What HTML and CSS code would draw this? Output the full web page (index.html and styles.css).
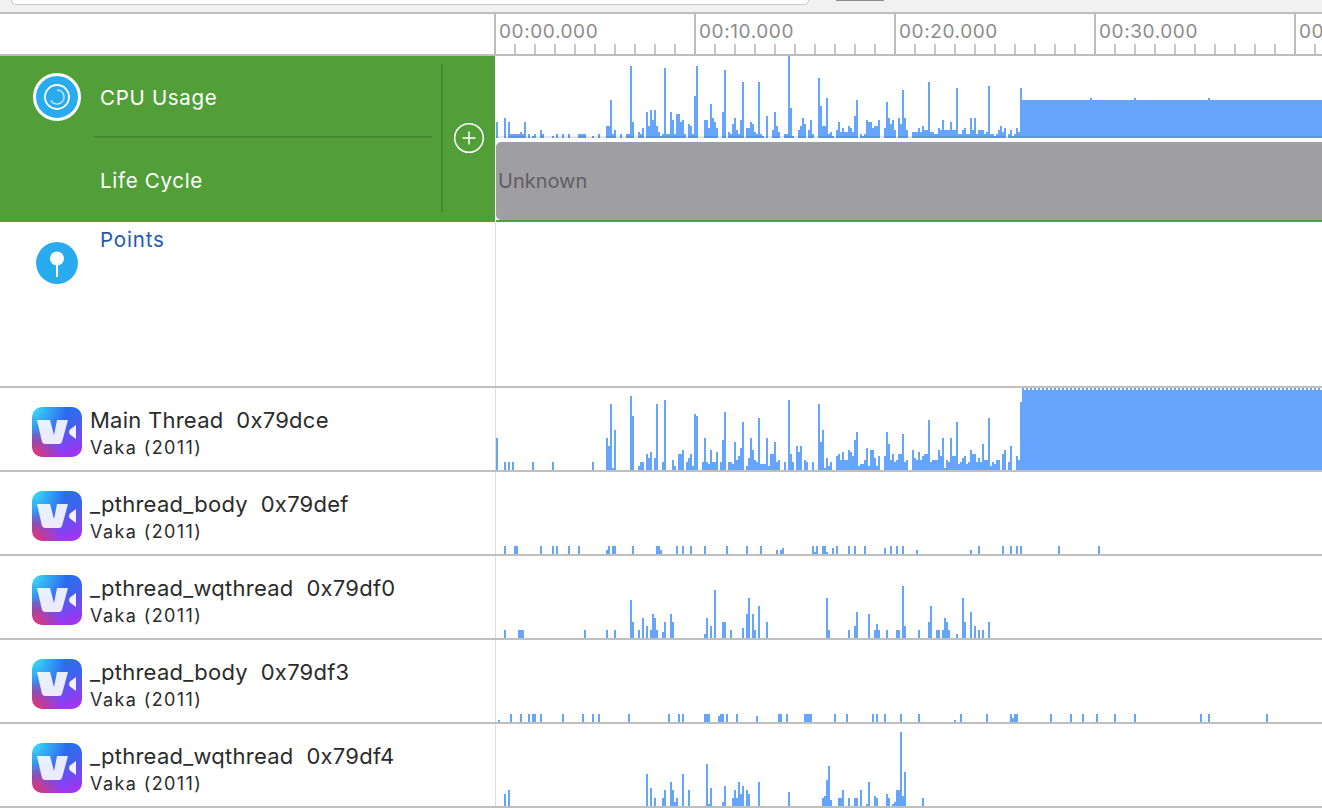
FILE: index.html
```html
<!DOCTYPE html>
<html lang="en">
<head>
  <meta charset="UTF-8">
  <meta name="viewport" content="width=device-width, initial-scale=1.0">
  <title>Instruments Timeline</title>
  <link rel="stylesheet" href="styles.css">
</head>
<body>
  <div class="toolbar">
    <div class="search-field"></div>
    <div class="toolbar-button"></div>
  </div>

  <div class="row ruler-row">
    <div class="side"></div>
    <div class="ruler">
      <div class="ruler-block">00:00.000</div>
      <div class="ruler-block">00:10.000</div>
      <div class="ruler-block">00:20.000</div>
      <div class="ruler-block">00:30.000</div>
      <div class="ruler-block">00:40.000</div>
    </div>
  </div>

  <div class="row selected-row">
    <div class="side selected-side">
      <div class="instrument-icon">
        <svg width="50" height="50" viewBox="0 0 50 50">
          <circle cx="25" cy="25" r="22.5" fill="#29abf0" stroke="#fff" stroke-width="3"/>
          <circle cx="25" cy="25" r="12" fill="none" stroke="#fff" stroke-width="1.8"/>
          <path d="M25 18a7 7 0 1 1-6 10.5" fill="none" stroke="#cdeafb" stroke-width="1.5"/>
        </svg>
      </div>
      <div class="selected-labels">
        <div class="selected-label">CPU Usage</div>
        <div class="selected-label">Life Cycle</div>
      </div>
      <div class="add-cell">
        <svg width="32" height="32" viewBox="0 0 32 32">
          <circle cx="16" cy="16" r="14.3" fill="none" stroke="#fff" stroke-width="1.5"/>
          <path d="M16 9.5v13M9.5 16h13" fill="none" stroke="#fff" stroke-width="1.5"/>
        </svg>
      </div>
    </div>
    <div class="selected-charts">
      <svg class="track cpu-track" id="cpu" width="826" height="82" viewBox="496 0 826 82">
        <rect class="bar" x="1022" y="44" width="300" height="38"/>
        <rect class="bar" x="1090" y="42" width="2" height="2"/>
        <rect class="bar" x="1134" y="42" width="2" height="2"/>
        <rect class="bar" x="1208" y="42" width="2" height="2"/>
        <rect class="track-base" x="496" y="80" width="826" height="2"/>
      </svg>
      <div class="life-cycle">Unknown</div>
    </div>
  </div>

  <div class="row points-row">
    <div class="side points-side">
      <div class="instrument-icon">
        <svg width="50" height="50" viewBox="0 0 50 50">
          <circle cx="25" cy="25" r="21" fill="#29abf0"/>
          <circle cx="25" cy="20.5" r="7" fill="#fff"/>
          <rect x="24" y="24" width="2" height="15" fill="#fff"/>
        </svg>
      </div>
      <div class="points-label">Points</div>
    </div>
    <div class="chart"></div>
  </div>

  <div class="row thread-row">
    <div class="side thread-side">
      <div class="app-icon">
        <svg width="50" height="50" viewBox="0 0 50 50">
          <path d="M5 13h13l4 15 3-15h11l-6 22q-.6 2-3 2H13q-2 0-3-2z" fill="#fff" fill-opacity=".88"/>
          <path d="M44 18v14l-6-4.500q-1-1.500-1-2.500t1-2.500z" fill="#fff" fill-opacity=".92"/>
        </svg>
      </div>
      <div class="thread-text">
        <div class="thread-name">Main Thread  0x79dce</div>
        <div class="thread-app">Vaka (2011)</div>
      </div>
    </div>
    <div class="chart">
      <svg class="track" id="main" width="826" height="82" viewBox="496 0 826 82">
        <rect class="bar" x="1022" y="2" width="300" height="80"/>
        <line class="bar-dots" x1="1022" y1="1" x2="1322" y2="1"/>
      </svg>
    </div>
  </div>

  <div class="row thread-row">
    <div class="side thread-side">
      <div class="app-icon">
        <svg width="50" height="50" viewBox="0 0 50 50">
          <path d="M5 13h13l4 15 3-15h11l-6 22q-.6 2-3 2H13q-2 0-3-2z" fill="#fff" fill-opacity=".88"/>
          <path d="M44 18v14l-6-4.500q-1-1.500-1-2.500t1-2.500z" fill="#fff" fill-opacity=".92"/>
        </svg>
      </div>
      <div class="thread-text">
        <div class="thread-name">_pthread_body  0x79def</div>
        <div class="thread-app">Vaka (2011)</div>
      </div>
    </div>
    <div class="chart">
      <svg class="track" id="body1" width="826" height="82" viewBox="496 0 826 82"></svg>
    </div>
  </div>

  <div class="row thread-row">
    <div class="side thread-side">
      <div class="app-icon">
        <svg width="50" height="50" viewBox="0 0 50 50">
          <path d="M5 13h13l4 15 3-15h11l-6 22q-.6 2-3 2H13q-2 0-3-2z" fill="#fff" fill-opacity=".88"/>
          <path d="M44 18v14l-6-4.500q-1-1.500-1-2.500t1-2.500z" fill="#fff" fill-opacity=".92"/>
        </svg>
      </div>
      <div class="thread-text">
        <div class="thread-name">_pthread_wqthread  0x79df0</div>
        <div class="thread-app">Vaka (2011)</div>
      </div>
    </div>
    <div class="chart">
      <svg class="track" id="wq1" width="826" height="82" viewBox="496 0 826 82"></svg>
    </div>
  </div>

  <div class="row thread-row">
    <div class="side thread-side">
      <div class="app-icon">
        <svg width="50" height="50" viewBox="0 0 50 50">
          <path d="M5 13h13l4 15 3-15h11l-6 22q-.6 2-3 2H13q-2 0-3-2z" fill="#fff" fill-opacity=".88"/>
          <path d="M44 18v14l-6-4.500q-1-1.500-1-2.500t1-2.500z" fill="#fff" fill-opacity=".92"/>
        </svg>
      </div>
      <div class="thread-text">
        <div class="thread-name">_pthread_body  0x79df3</div>
        <div class="thread-app">Vaka (2011)</div>
      </div>
    </div>
    <div class="chart">
      <svg class="track" id="body2" width="826" height="82" viewBox="496 0 826 82"></svg>
    </div>
  </div>

  <div class="row thread-row">
    <div class="side thread-side">
      <div class="app-icon">
        <svg width="50" height="50" viewBox="0 0 50 50">
          <path d="M5 13h13l4 15 3-15h11l-6 22q-.6 2-3 2H13q-2 0-3-2z" fill="#fff" fill-opacity=".88"/>
          <path d="M44 18v14l-6-4.500q-1-1.500-1-2.500t1-2.500z" fill="#fff" fill-opacity=".92"/>
        </svg>
      </div>
      <div class="thread-text">
        <div class="thread-name">_pthread_wqthread  0x79df4</div>
        <div class="thread-app">Vaka (2011)</div>
      </div>
    </div>
    <div class="chart">
      <svg class="track" id="wq2" width="826" height="82" viewBox="496 0 826 82"></svg>
    </div>
  </div>

  <script src="bars.js"></script>
</body>
</html>
```

FILE: styles.css
```css
body {
  margin: 0;
  height: 808px;
  overflow: hidden;
  background: #fff;
  font-family: Inter, "Open Sans", sans-serif;
}

.toolbar {
  display: flex;
  height: 12px;
  padding-left: 11px;
  background: #f1f1f1;
  border-bottom: 2px solid #bdbdbd;
  overflow: hidden;
}
.search-field {
  width: 796px;
  height: 4px;
  background: #fff;
  border: 1px solid #c6c6c6;
  border-top: none;
  border-radius: 0 0 8px 8px;
}
.toolbar-button {
  width: 48px;
  height: 1px;
  margin-left: 27px;
  background: #8b8b8b;
}

.row {
  display: flex;
}
.side {
  flex: none;
  width: 495px;
}
.chart {
  flex: 1;
  border-left: 1px solid #dedede;
  min-width: 0;
}

.ruler-row {
  height: 40px;
  border-bottom: 2px solid #bdbdbd;
}
.ruler {
  display: flex;
  flex: 1;
  margin-left: -1px;
  overflow: hidden;
}
.ruler-block {
  flex: none;
  box-sizing: border-box;
  width: 200px;
  padding: 7px 0 0 3px;
  border-left: 2px solid #bdbdbd;
  font-size: 19px;
  line-height: 21px;
  letter-spacing: 0.6px;
  color: #8c8c8c;
  background: repeating-linear-gradient(90deg, transparent 0 18px, #c6c6c6 18px 20px) left bottom / 100% 10px no-repeat;
}

.selected-row {
  height: 166px;
}
.selected-side {
  display: flex;
  background: #529f39;
  color: #fff;
}
.instrument-icon {
  flex: none;
  width: 50px;
  height: 50px;
  margin-left: 32px;
}
.selected-side .instrument-icon {
  margin-top: 16px;
}
.selected-labels {
  flex: none;
  width: 338px;
  margin: 0 9px 0 12px;
}
.selected-label {
  box-sizing: border-box;
  height: 82px;
  padding: 29px 0 0 6px;
  font-size: 20.5px;
  line-height: 26px;
  letter-spacing: 0.7px;
}
.selected-label:first-child {
  border-bottom: 2px solid #458a33;
}
.selected-label:last-child {
  padding-top: 30px;
}
.add-cell {
  flex: none;
  display: flex;
  align-items: center;
  justify-content: center;
  width: 52px;
  height: 148px;
  margin-top: 8px;
  border-left: 2px solid #458a33;
}
.selected-charts {
  flex: 1;
  min-width: 0;
  margin-left: 1px;
  border-bottom: 2px solid #529f39;
}
.track {
  display: block;
}
.bar {
  fill: #66a5fd;
}
.bar-dots {
  stroke: #66a5fd;
  stroke-width: 2;
  stroke-dasharray: 2 2;
}
.track-base {
  fill: rgba(0, 0, 0, 0.1);
}
.life-cycle {
  box-sizing: border-box;
  height: 78px;
  margin-top: 4px;
  padding: 26px 0 0 2px;
  background: #9f9ea3;
  border-radius: 5px 0 0 5px;
  font-size: 20px;
  line-height: 26px;
  color: #5f5e62;
}

.points-row {
  height: 164px;
  border-bottom: 2px solid #bfbfbf;
}
.points-side {
  display: flex;
}
.points-side .instrument-icon {
  margin-top: 16px;
}
.points-label {
  margin: 5px 0 0 18px;
  font-size: 20.5px;
  line-height: 26px;
  letter-spacing: 0.85px;
  color: #1e5ab0;
}

.thread-row {
  height: 82px;
  border-bottom: 2px solid #bfbfbf;
}
.thread-side {
  display: flex;
  box-sizing: border-box;
  padding: 19px 0 0 32px;
}
.app-icon {
  flex: none;
  width: 50px;
  height: 50px;
  border-radius: 10px;
  background:
    radial-gradient(circle at 0% 100%, #ee3560 0, rgba(238, 53, 96, 0) 42%),
    radial-gradient(circle at 0% 0%, #3fe2f6 0, rgba(63, 226, 246, 0) 48%),
    linear-gradient(160deg, #1278ee 0%, #3f63f0 45%, #a035f2 90%);
}
.thread-text {
  margin-left: 8px;
  color: #2b2b2b;
}
.thread-name {
  font-size: 22px;
  line-height: 27px;
  letter-spacing: 0.25px;
  white-space: pre;
}
.thread-app {
  font-size: 18px;
  line-height: 27px;
  letter-spacing: 1.4px;
}
```

FILE: bars.js
```js
// page x : bar height, bars are 2px wide and stand on the bottom of the track
var tracks = {
  cpu: "496:16 504:20 508:16 510:4 512:4 514:4 516:4 518:4 520:6 522:4 524:16 528:4 532:2 534:4 540:8 542:4 552:2 556:4 562:4 568:4 578:4 580:4 582:4 584:4 592:2 598:4 606:12 608:12 610:38 612:4 614:8 620:4 626:4 628:4 630:72 632:16 638:6 640:4 642:10 646:26 648:12 650:28 652:18 654:28 656:12 658:6 660:2 662:4 664:70 666:4 668:4 670:26 672:18 674:4 676:24 678:24 680:16 682:18 684:4 688:14 690:12 692:4 694:42 696:72 704:18 706:18 708:10 710:34 712:20 714:16 716:10 722:26 724:68 728:6 730:4 732:14 734:20 736:8 738:4 740:18 742:56 746:10 748:10 750:16 752:14 754:6 756:4 758:56 760:4 762:2 766:22 772:8 774:26 776:12 778:6 784:4 786:4 788:82 790:30 792:2 798:8 800:12 802:20 804:14 808:8 810:18 812:4 818:60 820:32 822:12 824:12 826:40 828:4 830:6 832:2 836:8 838:16 840:6 842:10 844:6 846:6 848:12 850:10 852:6 854:22 856:38 860:4 862:2 864:4 866:18 868:16 870:16 872:10 874:12 876:12 878:18 884:10 886:36 888:20 890:14 892:18 894:8 898:20 900:14 902:48 904:20 906:8 912:6 914:6 916:6 918:10 920:6 922:12 924:8 926:8 928:56 930:6 932:6 934:4 936:4 938:10 940:8 942:18 944:8 946:8 948:8 950:16 952:8 954:8 956:50 958:4 960:4 962:8 964:10 966:4 968:4 970:20 972:8 974:20 976:4 978:8 980:8 982:8 984:4 986:6 988:52 990:4 992:4 994:2 996:4 998:8 1000:12 1002:6 1004:10 1008:4 1010:8 1012:2 1014:4 1016:10 1018:6 1020:50",
  main: "496:32 504:8 508:8 512:8 532:8 552:8 592:8 606:32 608:24 610:66 612:2 614:40 630:74 632:54 638:4 640:8 642:8 646:16 648:12 650:18 654:12 656:66 662:8 664:70 672:10 674:4 678:16 680:16 682:20 686:8 688:12 690:16 692:4 694:56 696:54 702:8 704:32 706:8 708:6 710:20 712:8 714:8 716:18 720:8 722:30 724:58 728:8 730:8 732:6 734:28 736:10 738:14 740:22 742:48 746:4 748:12 750:32 752:20 754:10 756:8 758:52 760:6 762:6 764:6 766:32 768:4 770:16 772:16 774:28 776:8 778:10 784:8 788:70 790:16 792:8 796:24 798:18 800:24 804:10 806:8 812:8 818:66 820:28 822:40 824:2 826:12 828:4 830:8 836:14 838:16 840:10 842:18 844:10 846:10 848:20 850:18 852:14 854:30 856:38 858:4 860:6 862:6 864:10 866:22 868:4 870:20 872:20 874:12 876:4 878:14 884:14 886:38 888:26 890:10 892:16 894:8 896:10 898:16 900:16 902:36 904:8 906:10 912:20 914:12 916:10 918:18 920:10 922:14 924:16 926:16 928:50 930:8 932:10 934:10 936:10 938:20 940:14 942:32 944:2 946:10 948:8 950:32 952:14 954:14 956:48 958:6 960:8 962:12 964:14 966:6 968:8 970:20 972:16 974:16 976:8 978:12 980:8 982:26 984:10 986:10 988:52 990:4 992:8 994:6 996:10 998:10 1002:16 1004:20 1008:8 1010:24 1016:14 1018:10 1020:68",
  body1: "504:8 514:8 516:8 540:8 552:8 556:8 568:8 578:8 606:4 608:8 612:8 614:8 632:8 656:8 658:8 660:4 676:8 682:8 690:8 704:8 726:8 746:8 760:8 776:4 780:4 782:6 812:8 814:2 816:8 822:8 824:8 826:2 832:6 836:8 848:8 854:8 864:8 884:6 890:8 896:8 902:8 916:4 970:4 978:8 1002:8 1010:8 1016:8 1020:8 1058:8 1098:8",
  wq1: "504:8 518:8 520:8 522:8 584:8 606:8 614:8 630:38 632:16 638:8 642:20 646:12 650:8 652:24 654:20 656:8 662:6 664:16 670:24 672:16 704:4 706:20 710:12 714:48 722:16 724:16 730:8 742:10 746:24 748:40 752:24 754:8 758:32 766:16 826:40 828:8 848:8 854:12 856:26 868:24 874:8 876:14 878:8 886:8 896:8 898:8 902:52 904:12 918:8 928:16 930:32 936:8 938:8 942:8 944:20 946:16 948:8 956:4 962:40 964:16 970:26 974:12 978:8 982:8 988:16",
  body2: "498:2 510:8 520:8 528:8 532:8 534:8 540:8 562:8 582:8 592:8 598:8 628:8 668:8 678:8 682:8 704:8 706:8 708:8 718:6 720:8 722:8 726:8 736:8 756:6 778:8 780:8 786:8 804:8 806:8 808:8 810:8 834:8 846:8 872:8 876:8 884:8 900:8 918:8 954:2 960:8 986:8 1010:8 1012:4 1014:8 1016:8 1050:8 1070:8 1082:8 1096:8 1114:8 1134:8 1200:8 1208:8 1266:8",
  wq2: "504:12 508:16 646:32 650:18 654:8 662:8 664:16 670:24 672:16 674:4 676:8 682:32 688:16 706:42 708:2 710:18 722:4 724:20 732:8 734:16 736:8 738:24 740:12 742:20 746:16 748:12 758:24 788:14 822:8 824:10 826:26 828:40 830:6 838:8 840:8 842:16 848:8 854:8 856:8 860:16 866:2 868:24 874:10 876:8 886:12 888:8 892:2 894:4 896:16 898:16 900:74 902:10 904:34 922:8"
};

Object.keys(tracks).forEach(function(id) {
  var svg = document.getElementById(id);
  var d = tracks[id].split(" ").map(function(bar) {
    var parts = bar.split(":");
    return "M" + parts[0] + " 82v-" + parts[1] + "h2v" + parts[1] + "z";
  }).join("");

  var path = document.createElementNS("http://www.w3.org/2000/svg", "path");
  path.setAttribute("class", "bar");
  path.setAttribute("d", d);
  svg.prepend(path);
});
```
